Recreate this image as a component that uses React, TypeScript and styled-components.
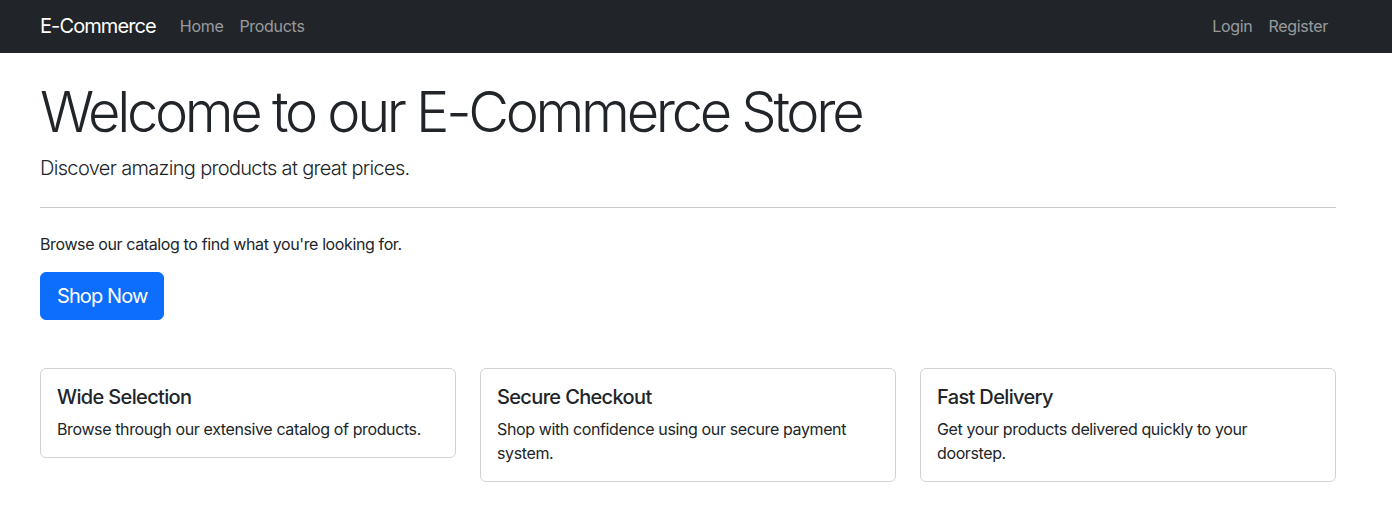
import React from "react";
import styled, { createGlobalStyle } from "styled-components";

const Global = createGlobalStyle`
  * { box-sizing: border-box; }
  body {
    margin: 0;
    font-family: Inter, "Noto Sans", "Liberation Sans", sans-serif;
    font-size: 16px;
    line-height: 1.5;
    color: #212529;
    background: #fff;
  }
`;

const NavBar = styled.nav`
  background: #212529;
  height: 53px;
  display: flex;
  align-items: center;
  padding: 0 56px 1px 40px;
`;

const Brand = styled.a`
  color: #fff;
  font-size: 20px;
  line-height: 30px;
  letter-spacing: -0.9px;
  margin-right: 16px;
  text-decoration: none;
`;

const NavList = styled.div<{ $end?: boolean }>`
  display: flex;
  margin-left: ${(p) => (p.$end ? "auto" : "0")};
`;

const NavLink = styled.a`
  color: rgba(255, 255, 255, 0.55);
  font-size: 16px;
  letter-spacing: -0.3px;
  padding: 8px;
  text-decoration: none;
`;

const Main = styled.main`
  padding: 26px 56px 0 40px;
`;

const Title = styled.h1`
  margin: 0 0 8px;
  font-size: 56px;
  font-weight: 300;
  line-height: 66px;
  letter-spacing: -3.3px;
`;

const Lead = styled.p`
  margin: 0;
  font-size: 20px;
  font-weight: 300;
  line-height: 30px;
  letter-spacing: -0.67px;
`;

const Rule = styled.hr`
  margin: 24px 0 0;
  border: 0;
  border-top: 1px solid #c8c9ca;
`;

const Text = styled.p`
  margin: 24px 0 16px;
  font-size: 16px;
  line-height: 24px;
  letter-spacing: -0.38px;
`;

const Button = styled.a`
  display: inline-block;
  background: #0d6efd;
  border: 1px solid #0d6efd;
  color: #fff;
  font-size: 20px;
  line-height: 30px;
  letter-spacing: -0.9px;
  padding: 8px 16px;
  border-radius: 6px;
  text-decoration: none;
`;

const CardRow = styled.div`
  margin-top: 48px;
  display: grid;
  grid-template-columns: repeat(3, 1fr);
  gap: 24px;
  align-items: start;
`;

const Card = styled.div`
  border: 1px solid rgba(0, 0, 0, 0.175);
  border-radius: 6px;
  padding: 16px;
`;

const CardTitle = styled.h5`
  margin: 0 0 8px;
  font-size: 20px;
  font-weight: 500;
  line-height: 24px;
  letter-spacing: -0.65px;
`;

const CardText = styled.p`
  margin: 0;
  font-size: 16px;
  line-height: 24px;
  letter-spacing: -0.38px;
`;

const features = [
  { title: "Wide Selection", text: "Browse through our extensive catalog of products." },
  { title: "Secure Checkout", text: "Shop with confidence using our secure payment system." },
  { title: "Fast Delivery", text: "Get your products delivered quickly to your doorstep." },
];

export default function App() {
  return (
    <>
      <Global />
      <NavBar>
        <Brand href="#">E-Commerce</Brand>
        <NavList>
          <NavLink href="#">Home</NavLink>
          <NavLink href="#">Products</NavLink>
        </NavList>
        <NavList $end>
          <NavLink href="#">Login</NavLink>
          <NavLink href="#">Register</NavLink>
        </NavList>
      </NavBar>
      <Main>
        <Title>Welcome to our E-Commerce Store</Title>
        <Lead>Discover amazing products at great prices.</Lead>
        <Rule />
        <Text>Browse our catalog to find what you're looking for.</Text>
        <Button href="#">Shop Now</Button>
        <CardRow>
          {features.map((f) => (
            <Card key={f.title}>
              <CardTitle>{f.title}</CardTitle>
              <CardText>{f.text}</CardText>
            </Card>
          ))}
        </CardRow>
      </Main>
    </>
  );
}
